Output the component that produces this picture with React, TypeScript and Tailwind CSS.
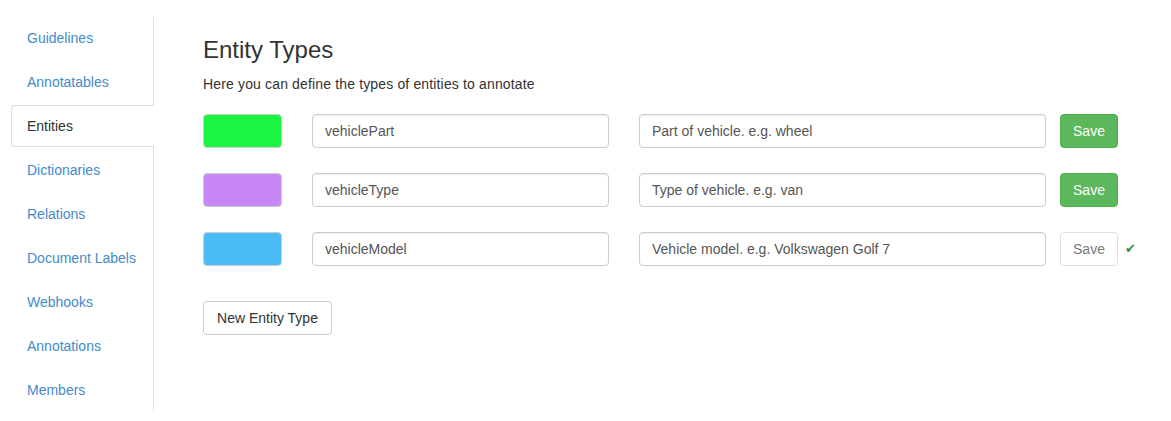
import React from "react";

const navItems = [
  "Guidelines",
  "Annotatables",
  "Entities",
  "Dictionaries",
  "Relations",
  "Document Labels",
  "Webhooks",
  "Annotations",
  "Members",
];

const rows = [
  { color: "bg-[#19f542]", name: "vehiclePart", desc: "Part of vehicle. e.g. wheel", dirty: true },
  { color: "bg-[#c788f5]", name: "vehicleType", desc: "Type of vehicle. e.g. van", dirty: true },
  { color: "bg-[#4bbbf5]", name: "vehicleModel", desc: "Vehicle model. e.g. Volkswagen Golf 7", dirty: false },
];

export default function App() {
  return (
    <div
      className="flex w-[1171px] h-[421px] bg-white text-[14px] text-[#333]"
      style={{ fontFamily: '"Liberation Sans", Arial, Helvetica, sans-serif' }}
    >
      <div className="w-[154px] pt-[17px] pl-[11px] shrink-0">
        <ul className="flex flex-col gap-[2px] border-r border-[#ddd]">
          {navItems.map((item) => {
            const active = item === "Entities";
            return (
              <li
                key={item}
                className={
                  active
                    ? "h-[42px] flex items-center pl-[15px] leading-[20px] bg-white text-[#333] border border-r-0 border-[#ddd] rounded-l-[4px] -mr-px pr-px"
                    : "h-[42px] flex items-center pl-[16px] leading-[20px] text-[#428bca]"
                }
              >
                {item}
              </li>
            );
          })}
        </ul>
      </div>
      <div className="flex-1 pl-[49px] pt-[37px]">
        <h3 className="text-[24px] leading-[26px] font-normal text-[#333]">Entity Types</h3>
        <p className="mt-[11px] leading-[20px] tracking-[0.15px]">Here you can define the types of entities to annotate</p>
        <div className="mt-[20px] flex flex-col gap-[25px]">
          {rows.map((r) => (
            <div key={r.name} className="flex items-center h-[34px]">
              <div className={`w-[79px] h-[34px] rounded-[4px] border border-[#ccc] ${r.color}`} />
              <div className="ml-[30px] w-[297px] h-[34px] border border-[#ccc] rounded-[4px] px-[12px] flex items-center text-[#555] shadow-[inset_0_1px_1px_rgba(0,0,0,0.075)]">
                {r.name}
              </div>
              <div className="ml-[30px] w-[407px] h-[34px] border border-[#ccc] rounded-[4px] px-[12px] flex items-center text-[#555] shadow-[inset_0_1px_1px_rgba(0,0,0,0.075)]">
                {r.desc}
              </div>
              {r.dirty ? (
                <div className="ml-[14px] w-[58px] h-[34px] rounded-[4px] border border-[#4cae4c] bg-[#5cb85c] text-white flex items-center justify-center">
                  Save
                </div>
              ) : (
                <>
                  <div className="ml-[14px] w-[58px] h-[34px] rounded-[4px] border border-[#e0e0e0] bg-white text-[#7a7a7a] flex items-center justify-center">
                    Save
                  </div>
                  <span className="ml-[7px] text-[13px] text-[#3c8d3c]">✔</span>
                </>
              )}
            </div>
          ))}
        </div>
        <div className="mt-[35px] w-[129px] h-[34px] rounded-[4px] border border-[#ccc] bg-white text-[#333] flex items-center justify-center">
          New Entity Type
        </div>
      </div>
    </div>
  );
}
